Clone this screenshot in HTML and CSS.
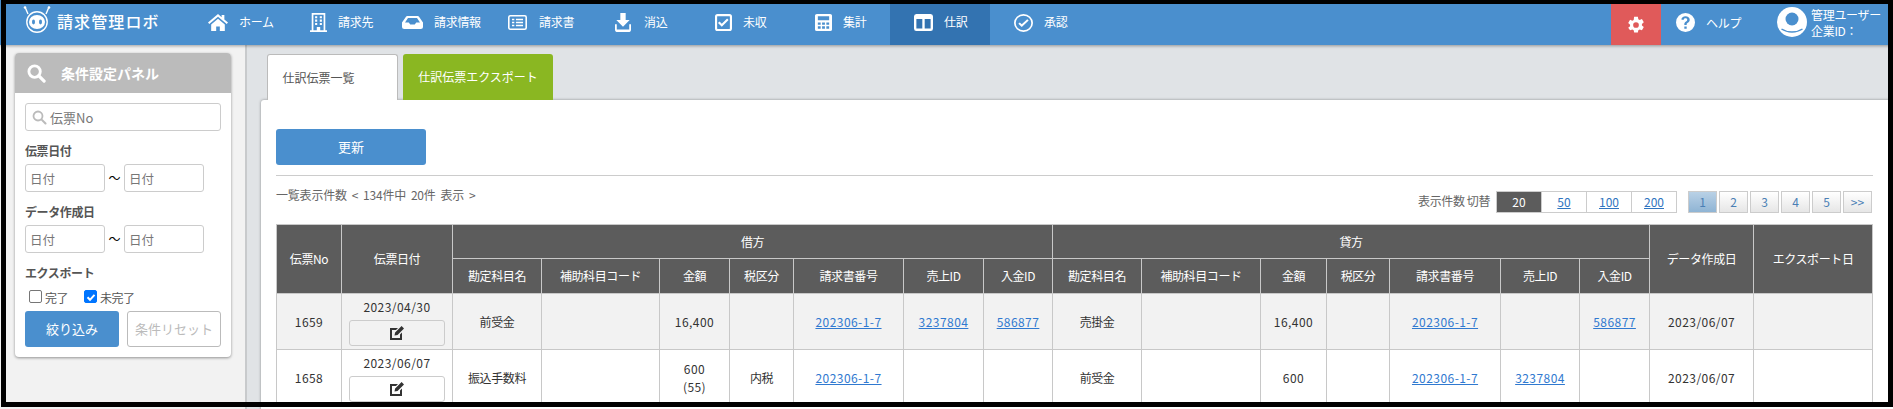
FILE: index.html
```html
<!DOCTYPE html>
<html lang="ja">
<head>
<meta charset="utf-8">
<title>請求管理ロボ</title>
<link rel="stylesheet" href="styles.css">
</head>
<body>
<div class="page">
  <header class="topbar">
    <div class="logo">
      <svg class="logo-mark" viewBox="0 0 30 27"><g fill="none" stroke="#fff" stroke-width="1.400"><path d="M3 1l3 7M27 1l-3 7"/><circle cx="15" cy="16" r="10.200"/></g><circle cx="3" cy="1.500" r="1.300" fill="#fff"/><circle cx="27" cy="1.500" r="1.300" fill="#fff"/><ellipse cx="15" cy="16" rx="8" ry="7" fill="#fff"/><ellipse cx="11.500" cy="16" rx="1.500" ry="2.400" fill="#4a8fce"/><ellipse cx="18.500" cy="16" rx="1.500" ry="2.400" fill="#4a8fce"/></svg>
      <span class="logo-text">請求管理ロボ</span>
    </div>
    <nav class="nav">
      <a class="nav-item w-home"><svg class="ic" viewBox="1 3 22 19" preserveAspectRatio="none"><path fill="#fff" d="M12 3 1 12.500l1.400 1.600L12 6l9.600 8.100 1.400-1.600-4-3.400V4h-3v2.600zM4.500 14.600V22H10v-5h4v5h5.500v-7.400L12 8.300z"/></svg><span>ホーム</span></a>
      <a class="nav-item w-client"><svg class="ic" viewBox="2 1 20 23" preserveAspectRatio="none"><path fill="#fff" fill-rule="evenodd" d="M4 1h16v21h2v2H2v-2h2zm2 2v19h4v-4h4v4h4V3zm2 2h2.500v2.500H8zm5.500 0H16v2.500h-2.500zM8 9h2.500v2.500H8zm5.500 0H16v2.500h-2.500zM8 13h2.500v2.500H8zm5.500 0H16v2.500h-2.500z"/></svg><span>請求先</span></a>
      <a class="nav-item w-info"><svg class="ic" viewBox="0 3 28 20" preserveAspectRatio="none"><path fill="#fff" fill-rule="evenodd" d="M7 3h14a2 2 0 0 1 1.700 1L28 13v7a3 3 0 0 1-3 3H3a3 3 0 0 1-3-3v-7L5.300 4A2 2 0 0 1 7 3zm1 3-4 7h5l2 3h6l2-3h5l-4-7z"/></svg><span>請求情報</span></a>
      <a class="nav-item w-bill"><svg class="ic" viewBox="0 2 24 20" preserveAspectRatio="none"><path fill="#fff" fill-rule="evenodd" d="M3 2h18a3 3 0 0 1 3 3v14a3 3 0 0 1-3 3H3a3 3 0 0 1-3-3V5a3 3 0 0 1 3-3zm0 2a1 1 0 0 0-1 1v14a1 1 0 0 0 1 1h18a1 1 0 0 0 1-1V5a1 1 0 0 0-1-1zm2 3h3v2H5zm5 0h9v2h-9zm-5 4h3v2H5zm5 0h9v2h-9zm-5 4h3v2H5zm5 0h9v2h-9z"/></svg><span>請求書</span></a>
      <a class="nav-item w-rec"><svg class="ic" viewBox="3 1 18 22" preserveAspectRatio="none"><path fill="#fff" d="M9 1h6v8h4.500L12 17 4.500 9H9zM3 14h2v6h14v-6h2v6a3 3 0 0 1-3 3H6a3 3 0 0 1-3-3z"/></svg><span>消込</span></a>
      <a class="nav-item w-unpaid"><svg class="ic" viewBox="2 2 20 20" preserveAspectRatio="none"><path fill="#fff" fill-rule="evenodd" d="M5 2h14a3 3 0 0 1 3 3v14a3 3 0 0 1-3 3H5a3 3 0 0 1-3-3V5a3 3 0 0 1 3-3zm0 2.500a.5.5 0 0 0-.5.500v14a.5.5 0 0 0 .5.500h14a.5.5 0 0 0 .5-.5V5a.5.5 0 0 0-.5-.5zM10 17l-4.500-4.500 1.800-1.800 2.700 2.700 6.200-6.200 1.800 1.800z"/></svg><span>未収</span></a>
      <a class="nav-item w-sum"><svg class="ic" viewBox="3 1 18 22" preserveAspectRatio="none"><path fill="#fff" fill-rule="evenodd" d="M5 1h14a2 2 0 0 1 2 2v18a2 2 0 0 1-2 2H5a2 2 0 0 1-2-2V3a2 2 0 0 1 2-2zm1 3v5h12V4zm0 8v3h3v-3zm4.500 0v3h3v-3zm4.500 0v3h3v-3zM6 17v3h3v-3zm4.500 0v3h3v-3zm4.500 0v3h3v-3z"/></svg><span>集計</span></a>
      <a class="nav-item w-journal active"><svg class="ic" viewBox="0 2 24 20" preserveAspectRatio="none"><path fill="#fff" fill-rule="evenodd" d="M3 2h18a3 3 0 0 1 3 3v14a3 3 0 0 1-3 3H3a3 3 0 0 1-3-3V5a3 3 0 0 1 3-3zm0 6v11h7.500V8zm10.500 0v11H21V8z"/></svg><span>仕訳</span></a>
      <a class="nav-item w-approve"><svg class="ic" viewBox="1 1 22 22" preserveAspectRatio="none"><path fill="#fff" fill-rule="evenodd" d="M12 1a11 11 0 1 1 0 22 11 11 0 0 1 0-22zm0 2a9 9 0 1 0 0 18 9 9 0 0 0 0-18zm-2 14-4-4 1.700-1.700 2.300 2.300 6.300-6.300L18 9z"/></svg><span>承認</span></a>
    </nav>
    <div class="top-right">
      <a class="gear"><svg viewBox="0 0 24 24" width="18" height="18"><path fill="#fff" fill-rule="evenodd" d="M9.500 1h5l.6 3.200 1.800 1 3-1.100 2.500 4.300-2.500 2.100v2.100l2.500 2.100-2.500 4.300-3-1.100-1.800 1-.6 3.200h-5l-.6-3.200-1.800-1-3 1.100L1.600 15.700l2.500-2.100v-2.100L1.600 9.400l2.500-4.300 3 1.100 1.800-1zM12 8.200a3.800 3.800 0 1 0 0 7.600 3.800 3.800 0 0 0 0-7.600z"/></svg></a>
      <a class="help"><svg viewBox="0 0 24 24" width="19" height="19"><path fill="#fff" fill-rule="evenodd" d="M12 0a12 12 0 1 1 0 24 12 12 0 0 1 0-24zm-1.500 17v3h3v-3zM12 4c-3 0-5 1.700-5.300 4.300l2.800.5C9.700 7.400 10.600 6.700 12 6.700c1.300 0 2.200.7 2.200 1.800 0 .9-.5 1.400-1.500 2.100-1.500 1-2.200 1.900-2.200 3.400v1h3v-.7c0-.8.3-1.200 1.400-1.900 1.600-1.100 2.400-2.300 2.400-4C17.300 5.700 15.100 4 12 4z"/></svg><span>ヘルプ</span></a>
      <div class="user">
        <svg viewBox="0 0 30 30" width="30" height="30"><circle cx="15" cy="15" r="15" fill="#fff"/><circle cx="15" cy="12" r="6.500" fill="#4a8fce"/><path d="M4.500 22c3 2 6.500 3 10.500 3s7.500-1 10.500-3" fill="none" stroke="#4a8fce" stroke-width="1.500"/></svg>
        <div class="user-text">管理ユーザー<br>企業ID：</div>
      </div>
    </div>
  </header>

  <div class="main">
    <aside class="side">
      <section class="panel">
        <h2 class="panel-head"><svg viewBox="0 0 20 20" width="19" height="19"><circle cx="8" cy="8" r="6" fill="none" stroke="#fff" stroke-width="3"/><path d="m12.500 12.500 5.500 5.500" stroke="#fff" stroke-width="3.400" stroke-linecap="round"/></svg><span>条件設定パネル</span></h2>
        <div class="panel-body">
          <div class="search-field"><svg viewBox="0 0 20 20" width="15" height="15"><circle cx="8" cy="8" r="6" fill="none" stroke="#bbb" stroke-width="2.400"/><path d="m12.500 12.500 5.500 5.500" stroke="#bbb" stroke-width="2.800" stroke-linecap="round"/></svg><span>伝票No</span></div>
          <h3 class="label">伝票日付</h3>
          <div class="range"><div class="date">日付</div><span class="tilde">～</span><div class="date">日付</div></div>
          <h3 class="label">データ作成日</h3>
          <div class="range"><div class="date">日付</div><span class="tilde">～</span><div class="date">日付</div></div>
          <h3 class="label">エクスポート</h3>
          <div class="checks">
            <label class="check"><span class="box"></span>完了</label>
            <label class="check"><span class="box on"><svg viewBox="0 0 12 12" width="12" height="12"><path d="m2.500 6.300 2.500 2.500 4.500-5" fill="none" stroke="#fff" stroke-width="2"/></svg></span>未完了</label>
          </div>
          <div class="panel-btns"><a class="btn-filter">絞り込み</a><a class="btn-reset">条件リセット</a></div>
        </div>
      </section>
    </aside>

    <main class="content">
      <div class="tabs">
        <a class="tab tab-on">仕訳伝票一覧</a>
        <a class="tab tab-export">仕訳伝票エクスポート</a>
      </div>
      <section class="card">
        <a class="btn-refresh">更新</a>
        <hr class="rule">
        <div class="toolbar">
          <div class="count">一覧表示件数 &lt; 134件中 20件 表示 &gt;</div>
          <div class="tools">
            <span class="switch-label">表示件数 切替</span>
            <div class="sizes"><span class="size cur">20</span><a class="size">50</a><a class="size">100</a><a class="size">200</a></div>
            <div class="pager"><span class="pg pg-on">1</span><a class="pg">2</a><a class="pg">3</a><a class="pg">4</a><a class="pg">5</a><a class="pg">&gt;&gt;</a></div>
          </div>
        </div>
        <table class="grid">
          <colgroup>
            <col class="c1"><col class="c2"><col class="c3"><col class="c4"><col class="c5"><col class="c6"><col class="c7"><col class="c8"><col class="c9">
            <col class="c10"><col class="c11"><col class="c12"><col class="c13"><col class="c14"><col class="c15"><col class="c16"><col class="c17"><col class="c18">
          </colgroup>
          <thead>
            <tr class="h1">
              <th rowspan="2">伝票No</th><th rowspan="2">伝票日付</th><th colspan="7">借方</th><th colspan="7">貸方</th><th rowspan="2">データ作成日</th><th rowspan="2">エクスポート日</th>
            </tr>
            <tr class="h2">
              <th>勘定科目名</th><th>補助科目コード</th><th>金額</th><th>税区分</th><th>請求書番号</th><th>売上ID</th><th>入金ID</th>
              <th>勘定科目名</th><th>補助科目コード</th><th>金額</th><th>税区分</th><th>請求書番号</th><th>売上ID</th><th>入金ID</th>
            </tr>
          </thead>
          <tbody>
            <tr class="odd">
              <td class="n">1659</td>
              <td><div class="d n">2023/04/30</div><a class="edit"><svg viewBox="0 0 16 16" width="16" height="16"><path fill="#333" d="M1 3h8L7 5H3v8h8V9.500l2-2V15H1zM12.600 1 15 3.400l-6.500 6.500-3 .6.600-3z"/></svg></a></td>
              <td>前受金</td><td></td><td class="n">16,400</td><td></td><td><a class="lnk n">202306-1-7</a></td><td><a class="lnk n">3237804</a></td><td><a class="lnk n">586877</a></td>
              <td>売掛金</td><td></td><td class="n">16,400</td><td></td><td><a class="lnk n">202306-1-7</a></td><td></td><td><a class="lnk n">586877</a></td>
              <td class="n">2023/06/07</td><td></td>
            </tr>
            <tr>
              <td class="n">1658</td>
              <td><div class="d n">2023/06/07</div><a class="edit"><svg viewBox="0 0 16 16" width="16" height="16"><path fill="#333" d="M1 3h8L7 5H3v8h8V9.500l2-2V15H1zM12.600 1 15 3.400l-6.500 6.500-3 .6.600-3z"/></svg></a></td>
              <td>振込手数料</td><td></td><td class="n">600<br>(55)</td><td>内税</td><td><a class="lnk n">202306-1-7</a></td><td></td><td></td>
              <td>前受金</td><td></td><td class="n">600</td><td></td><td><a class="lnk n">202306-1-7</a></td><td><a class="lnk n">3237804</a></td><td></td>
              <td class="n">2023/06/07</td><td></td>
            </tr>
          </tbody>
        </table>
      </section>
    </main>
  </div>
  <div class="frame"></div>
</div>
</body>
</html>
```
FILE: styles.css
```css
* { box-sizing: border-box; }
html, body { margin: 0; height: 100%; overflow: hidden; }
body { font-family: "Noto Sans CJK JP", "Liberation Sans", sans-serif; font-size: 12px; color: #333; background: #fff; }
a { color: inherit; text-decoration: none; }
.page { position: relative; width: 1893px; height: 409px; overflow: hidden; background: #e0e3e6; }
.frame { position: absolute; left: 1px; top: 0; right: 0; height: 407px; border: solid #000; border-width: 4px 5px 5px 5px; pointer-events: none; }

.topbar { height: 45px; padding-top: 4px; display: flex; background: #4a8fce; color: #fff; box-shadow: 0 1px 3px rgba(0,0,0,.35); position: relative; }
.logo { width: 190px; padding: 2px 0 0 22px; display: flex; align-items: flex-start; gap: 5px; flex: none; }
.logo-mark { flex: none; width: 30px; height: 27px; }
.logo-text { font-size: 16px; line-height: 24px; font-weight: 500; letter-spacing: 1.100px; margin-top: 3px; white-space: nowrap; }
.nav { display: flex; flex: none; }
.nav-item { width: 100px; height: 41px; display: flex; align-items: center; gap: 11px; padding-bottom: 4px; font-size: 12px; line-height: 16px; letter-spacing: -.3px; white-space: nowrap; flex: none; }
.nav-item span { margin-bottom: 2px; }
.ic { flex: none; }
.w-home { padding-left: 18px; }
.w-home .ic { width: 20px; height: 17px; }
.w-client { padding-left: 20px; }
.w-client .ic { width: 17px; height: 19px; }
.w-info { padding-left: 12px; }
.w-info .ic { width: 21px; height: 13px; }
.w-bill { padding-left: 18px; gap: 12px; }
.w-bill .ic { width: 19px; height: 15px; }
.w-rec { padding-left: 25px; gap: 13px; }
.w-rec .ic { width: 16px; height: 19px; }
.w-unpaid { padding-left: 25px; }
.w-unpaid .ic { width: 17px; height: 17px; }
.w-sum { padding-left: 25px; }
.w-sum .ic { width: 17px; height: 17px; }
.w-journal { padding-left: 24px; }
.w-journal .ic { width: 19px; height: 17px; }
.w-approve { padding-left: 24px; }
.w-approve .ic { width: 19px; height: 18px; }
.active { background: #3373b1; }
.top-right { margin-left: auto; display: flex; flex: none; }
.gear { width: 50px; height: 41px; background: #e05a5a; display: flex; align-items: center; justify-content: center; }
.help { width: 110px; height: 37px; display: flex; align-items: center; gap: 11px; padding-left: 15px; letter-spacing: -.3px; }
.user { width: 122px; display: flex; align-items: flex-start; gap: 4px; padding: 3px 0 0 6px; }
.user-text { font-size: 12px; line-height: 16px; letter-spacing: -.3px; white-space: nowrap; }

.main { display: flex; height: 364px; }
.side { width: 247px; flex: none; background: #f2f2f2; border-right: 2px solid #c8cacc; padding: 8px 0 0 15px; }
.panel { width: 216px; background: #fff; border-radius: 4px; box-shadow: 0 1px 3px rgba(0,0,0,.4); }
.panel-head { margin: 0; height: 40px; background: #bbb; color: #fff; border-radius: 4px 4px 0 0; padding: 0 0 0 12px; display: flex; align-items: center; gap: 15px; font-size: 14px; line-height: 20px; font-weight: 700; }
.panel-body { padding: 10px; }
.search-field { height: 28px; margin-bottom: 1px; border: 1px solid #ccc; border-radius: 3px; display: flex; align-items: center; gap: 3px; padding-left: 6px; color: #777; font-size: 13px; }
.label { margin: 11px 0 5px; font-size: 12px; line-height: 17px; font-weight: 700; color: #555; letter-spacing: -.4px; }
.range { display: flex; align-items: center; }
.date { width: 80px; height: 28px; border: 1px solid #ccc; border-radius: 3px; padding-left: 4px; line-height: 27px; color: #777; font-size: 12.500px; }
.tilde { width: 19px; text-align: center; color: #000; font-size: 12px; line-height: 16px; }
.checks { display: flex; gap: 16px; padding: 4px 0 0 4px; height: 25px; color: #555; }
.check { display: flex; align-items: flex-start; gap: 3px; height: 16px; line-height: 16px; letter-spacing: -.5px; }
.box { width: 13px; height: 13px; border: 1px solid #767676; border-radius: 2px; background: #fff; display: block; }
.box.on { background: #0075ff; border-color: #0075ff; }
.box svg { display: block; margin-left: -.5px; }
.panel-btns { display: flex; justify-content: space-between; }
.btn-filter { width: 94px; height: 36px; line-height: 36px; background: #4a8fce; color: #fff; text-align: center; border-radius: 3px; font-size: 13px; }
.btn-reset { width: 94px; height: 36px; line-height: 34px; border: 1px solid #bbb; color: #bbb; text-align: center; border-radius: 3px; font-size: 13px; white-space: nowrap; }

.content { flex: 1; padding: 9px 0 0 14px; min-width: 0; }
.tabs { display: flex; gap: 5px; padding-left: 6px; height: 46px; }
.tab { height: 46px; font-size: 12px; line-height: 45px; text-align: center; flex: none; border-radius: 3px 3px 0 0; }
.tab-on { width: 131px; background: #fff; border: 1px solid #bbb; border-bottom: 0; position: relative; z-index: 1; padding-right: 28px; color: #555; }
.tab-export { width: 150px; background: #8ab722; color: #fff; }
.card { width: 1640px; height: 340px; background: #fff; border-radius: 3px 0 0 0; box-shadow: 0 0 3px rgba(0,0,0,.4); padding: 29px 0 0 15px; }
.btn-refresh { display: block; width: 150px; height: 36px; line-height: 36px; background: #4a8fce; color: #fff; text-align: center; font-size: 13px; border-radius: 3px; }
.rule { margin: 10px 0 0; border: 0; border-top: 1px solid #ccc; width: 1597px; }
.toolbar { display: flex; justify-content: space-between; width: 1596px; height: 48px; }
.count { padding-top: 11px; line-height: 16px; color: #666; font-size: 12px; letter-spacing: -.2px; word-spacing: 2.400px; }
.tools { display: flex; align-items: flex-start; padding-top: 15px; }
.switch-label { color: #666; line-height: 20px; margin-right: 6px; letter-spacing: -.4px; }
.sizes { display: flex; height: 22px; border: 1px solid #ccc; margin-right: 11px; }
.size { width: 45px; text-align: center; line-height: 20px; color: #2f74c0; text-decoration: underline; border-left: 1px solid #ccc; }
.size:first-child { border-left: 0; width: 44px; }
.size.cur { background: #5c5c5c; color: #fff; text-decoration: none; }
.pager { display: flex; gap: 2px; }
.pg { width: 29px; height: 22px; border: 1px solid #ccc; text-align: center; line-height: 20px; color: #4a7fb5; background: linear-gradient(#fff, #e6e6e6); }
.pg-on { background: linear-gradient(#b9d1e6, #8fb4d4); }

.grid { width: 1596px; border-collapse: collapse; table-layout: fixed; font-size: 12px; }
.grid th, .grid td { border: 1px solid #c8c8c8; text-align: center; vertical-align: middle; padding: 0; overflow: hidden; line-height: 18px; }
.grid th { background: #5c5c5c; color: #fff; font-weight: 400; white-space: nowrap; letter-spacing: -.4px; }
.grid td { letter-spacing: -.4px; }
.grid .n { letter-spacing: .45px; }
.grid .h1 { height: 34px; }
.grid .h2 { height: 35px; }
.grid tbody tr { height: 56px; color: #333; }
.grid .odd { background: #f2f2f2; }
.d { line-height: 16px; margin-top: 2px; }
.edit { display: flex; align-items: center; justify-content: center; width: 96px; height: 26px; margin: 5px auto 0; border: 1px solid #ccc; border-radius: 3px; }
.lnk { color: #3079d0; text-decoration: underline; }
.c1 { width: 65px; } .c2 { width: 111px; } .c3 { width: 89px; } .c4 { width: 118px; } .c5 { width: 70px; }
.c6 { width: 64px; } .c7 { width: 110px; } .c8 { width: 80px; } .c9 { width: 69px; } .c10 { width: 89px; }
.c11 { width: 119px; } .c12 { width: 66px; } .c13 { width: 63px; } .c14 { width: 111px; } .c15 { width: 79px; }
.c16 { width: 70px; } .c17 { width: 104px; } .c18 { width: 119px; }
```
